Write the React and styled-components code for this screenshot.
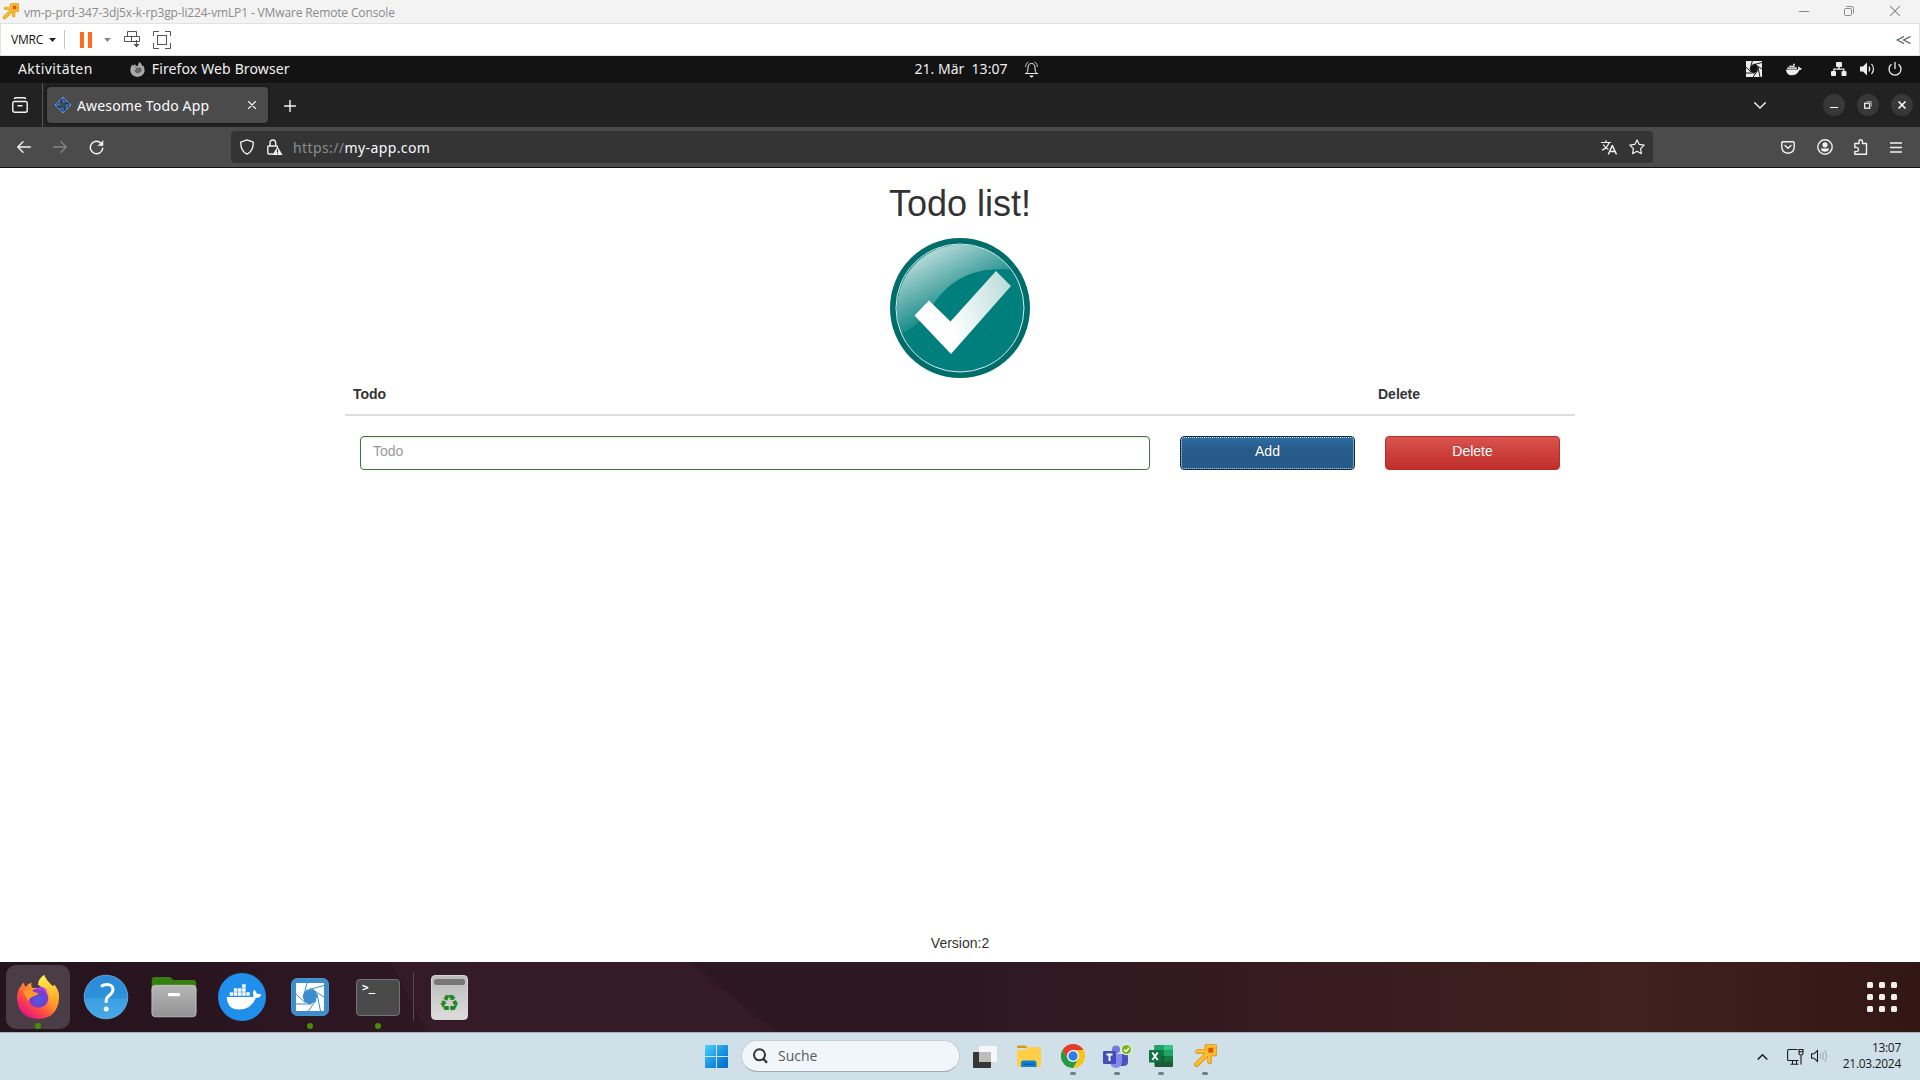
import React from "react";
import styled, { createGlobalStyle } from "styled-components";

const Global = createGlobalStyle`
  *, *::before, *::after { box-sizing: border-box; }
  html, body { margin: 0; padding: 0; }
  body { width: 1920px; height: 1080px; overflow: hidden; background: #fff; }
  svg { display: block; flex: none; }
`;

const ubuntu = `"Noto Sans", "Open Sans", sans-serif`;
const segoe = `"Open Sans", "Noto Sans", sans-serif`;
const helvetica = `"Liberation Sans", Arial, sans-serif`;

const Screen = styled.div`
  width: 1920px;
  height: 1080px;
  display: flex;
  flex-direction: column;
  overflow: hidden;
`;

const Bar = styled.div`
  display: flex;
  align-items: center;
  flex: none;
`;

const Spacer = styled.div`
  flex: 1;
`;

const Text = styled.span`
  white-space: pre;
  letter-spacing: ${(p) => p.$ls || 0}px;
  margin-left: ${(p) => p.$ml || 0}px;
  margin-top: ${(p) => p.$mt || 0}px;
`;

const Icon = styled.svg`
  margin-left: ${(p) => p.$ml || 0}px;
  margin-top: ${(p) => p.$mt || 0}px;
`;

/* ---------- VMware window ---------- */

const TitleBar = styled(Bar)`
  height: 24px;
  background: #f3f3f3;
  border-bottom: 1px solid #e2e2e2;
  padding: 0 20px 2px 2px;
  font: 12px/16px ${segoe};
  color: #8b8b8b;
`;

const VmToolbar = styled(Bar)`
  height: 32px;
  background: #fff;
  border: 1px solid #e2e2e2;
  border-top: 0;
  padding: 0 8px 0 10px;
  font: 12px/16px ${segoe};
  color: #111;
`;

const VmSeparator = styled.div`
  width: 1px;
  height: 19px;
  background: #c8c8c8;
  margin-left: 8px;
`;

const VmwareIcon = ({ size, ...rest }) => (
  <Icon width={size} height={size} viewBox="0 0 24 24" fill="none" {...rest}>
    <g stroke="#d98f0c" strokeLinejoin="round">
      <path d="M4.500 7.500H14M16.500 9V18" strokeWidth="4.400" strokeLinecap="round" />
      <path d="M16 8.500L3.500 20.500" strokeWidth="5" strokeLinecap="round" />
      <rect x="13" y="1.500" width="9.500" height="9.500" strokeWidth="2.600" />
    </g>
    <g stroke="#fcbd2c" strokeLinejoin="round">
      <path d="M4.500 7.300H14M16.300 9V18" strokeWidth="3" strokeLinecap="round" />
      <path d="M16 8.300L3.500 20.300" strokeWidth="3.600" strokeLinecap="round" />
      <rect x="13.300" y="1.800" width="8.900" height="8.900" strokeWidth="1.600" fill="#fcbd2c" />
    </g>
    <rect x="15.300" y="3.800" width="4.900" height="4.900" fill="#e2510f" />
  </Icon>
);

function VmWindowChrome() {
  return (
    <>
      <TitleBar>
        <VmwareIcon size={17} $mt={2} />
        <Text $ml={5} $mt={4} $ls={-0.14}>vm-p-prd-347-3dj5x-k-rp3gp-li224-vmLP1 - VMware Remote Console</Text>
        <Spacer />
        <Icon width="10" height="10" viewBox="0 0 10 10"><path d="M0 5.5H10" stroke="#8a8a8a" /></Icon>
        <Icon $ml={35} width="10" height="10" viewBox="0 0 10 10" fill="none" stroke="#8a8a8a">
          <rect x=".5" y="2.5" width="7" height="7" rx="1.2" /><path d="M2.5 .5H7.5Q9.5 .5 9.5 2.5V7.5" />
        </Icon>
        <Icon $ml={36} width="10" height="10" viewBox="0 0 10 10"><path d="M0 0L10 10M10 0L0 10" stroke="#8a8a8a" strokeWidth="1.1" /></Icon>
      </TitleBar>
      <VmToolbar>
        <Text $ls={-0.2}>VMRC</Text>
        <Icon $ml={6} width="7" height="4" viewBox="0 0 7 4"><path d="M0 0H7L3.5 4Z" fill="#222" /></Icon>
        <VmSeparator />
        <Icon $ml={15} width="12" height="16" viewBox="0 0 12 16"><path d="M0 0H4V16H0ZM8 0H12V16H8Z" fill="#ff6a1f" /></Icon>
        <Icon $ml={12} width="7" height="4" viewBox="0 0 7 4"><path d="M0 0H7L3.5 4Z" fill="#8a8a8a" /></Icon>
        <Icon $ml={13} width="17" height="17" viewBox="0 0 17 17" fill="none" stroke="#555">
          <path d="M3.5 5.5V.5H12.5V5.5M.5 5.5H15.5V10.5H.5ZM7.5 5.5V10.5M12.500 9V14" />
          <path d="M9.500 13H15.500L12.500 16.500Z" fill="#555" stroke="none" />
        </Icon>
        <Icon $ml={12} width="18" height="18" viewBox="0 0 18 18" fill="none" stroke="#555">
          <path d="M.5 5V.5H6M12 .5H17.500V5M17.500 12V17.500H12M6 17.500H.5V12" /><rect x="4.500" y="4.500" width="9" height="9" />
        </Icon>
        <Spacer />
        <Icon width="15" height="8" viewBox="0 0 15 8" fill="none" stroke="#3d5060" strokeWidth="1.100"><path d="M8 .5L1 4L8 7.500M14.500 .5L7.500 4L14.500 7.500" /></Icon>
      </VmToolbar>
    </>
  );
}

/* ---------- GNOME top bar ---------- */

const GnomeBar = styled(Bar)`
  height: 27px;
  padding-bottom: 1px;
  background: #131313;
  color: #efefef;
  font: 14px/20px ${ubuntu};
  display: grid;
  grid-template-columns: 1fr auto 1fr;
`;

const GnomeGroup = styled.div`
  display: flex;
  align-items: center;
  justify-content: ${(p) => p.$justify || "flex-start"};
  padding: ${(p) => p.$pad || 0};
`;

const Aperture = ({ size, fg, bg, sw, ...rest }) => (
  <Icon width={size} height={size} viewBox="0 0 28 28" {...rest}>
    <rect width="28" height="28" fill={fg} />
    <path d="M10 7.500L18 6.500L21.500 12L19.500 18.500L14 21.500L8.500 19L6.500 13Z" fill={bg} />
    <path d="M11 0L7.500 13M28 2.500L10 7.500M14 5L28 14M21 11L24.500 28M20 17L12.500 28M15 21H0M9 19.500L0 11" stroke={bg} strokeWidth={sw} fill="none" />
  </Icon>
);

const Whale = ({ w, h, fg, ...rest }) => (
  <Icon width={w} height={h} viewBox="0 0 36 28" fill={fg} {...rest}>
    <path d="M0 14H27Q28.500 12.500 27.200 10.500Q27 8 28.600 6.500Q31 8 31.200 10.600Q34 10.200 36 11.600Q34.500 15 30.200 15Q25.500 27 12.500 27Q1 27 0 14Z" />
    <path d="M3.200 9.200H6.800V12.800H3.200ZM7.500 9.200H11.100V12.800H7.500ZM11.800 9.200H15.400V12.800H11.800ZM16.100 9.200H19.700V12.800H16.100ZM20.400 9.200H24V12.800H20.400ZM7.500 5H11.100V8.600H7.500ZM11.800 5H15.400V8.600H11.800ZM16.100 5H19.700V8.600H16.100ZM16.100 .8H19.700V4.400H16.100Z" />
  </Icon>
);

function GnomeTopBar() {
  return (
    <GnomeBar>
      <GnomeGroup $pad="0 0 0 18px">
        <Text $ls={0.4}>Aktivitäten</Text>
        <Icon $ml={37} width="15" height="15" viewBox="0 0 42 44">
          <path d="M2 14L6 7L9 11L14 6L16 12L22 12Q22 4 28 0Q33 6 35 12L38 10Q42 18 42 26Q40 42 21 44Q2 42 0 26Q0 18 2 14Z" fill="#aaa" />
          <path d="M12 14L22 17Q30 12 33 20Q35 30 24 33Q13 33 12 24L18 20Z" fill="#666" />
        </Icon>
        <Text $ml={7} $ls={0.14}>Firefox Web Browser</Text>
      </GnomeGroup>
      <GnomeGroup $pad="0 0 0 33px">
        <Text>21. Mär  13:07</Text>
        <Icon $ml={18} width="13" height="17" viewBox="0 0 13 17" fill="none" stroke="#eee">
          <path d="M1.500 12.500Q3 11 3 7Q3 2.500 6.500 2.500Q10 2.500 10 7Q10 11 11.500 12.500Z" /><path d="M.5 6Q.5 2 3.500 1M12.500 6Q12.500 2 9.500 1" strokeWidth=".8" />
          <path d="M0 12.500H13" /><path d="M4.500 14.500H8.500Q8 16.500 6.500 16.500T4.500 14.500" fill="#eee" stroke="none" />
        </Icon>
      </GnomeGroup>
      <GnomeGroup $justify="flex-end" $pad="0 18px 0 0">
        <Aperture size={16} fg="#eee" bg="#131313" sw={1.700} />
        <Whale $ml={24} w={16} h={13} fg="#eee" />
        <Icon $ml={29} width="16" height="14" viewBox="0 0 16 14" fill="#eee">
          <rect x="5" width="6" height="5" rx="1" /><rect y="9" width="5" height="5" rx="1" /><rect x="10.500" y="9" width="5" height="5" rx="1" /><path d="M7.300 4H8.700V6.500H13.500V9.500H12.300V7.800H3.500V9.500H2.300V6.500H7.300Z" />
        </Icon>
        <Icon $ml={13} width="15" height="14" viewBox="0 0 15 14" fill="none" stroke="#eee">
          <path d="M0 4.500H3L7 .5V13.500L3 9.500H0Z" fill="#eee" stroke="none" /><path d="M9 4.500Q10.500 7 9 9.500" strokeWidth="1.400" /><path d="M11.500 2Q15.500 7 11.500 12" strokeWidth="1.200" />
        </Icon>
        <Icon $ml={13} width="14" height="14" viewBox="0 0 14 14" fill="none" stroke="#eee" strokeWidth="1.300">
          <path d="M3.500 2.200A6 6 0 1 0 10.500 2.200M7 0V7" />
        </Icon>
      </GnomeGroup>
    </GnomeBar>
  );
}

/* ---------- Firefox ---------- */

const TabStrip = styled(Bar)`
  height: 44px;
  background: #222;
  padding: 0 7px 0 12px;
`;

const StripDivider = styled.div`
  width: 1px;
  height: 44px;
  margin-left: 14px;
  background: #555;
`;

const Tab = styled.div`
  display: flex;
  align-items: center;
  width: 221px;
  height: 36px;
  margin-left: 4px;
  padding: 0 12px 0 8px;
  border-radius: 4px;
  background: #4b4b4b;
  box-shadow: 0 0 3px rgba(0, 0, 0, 0.5);
  color: #fbfbfe;
  font: 14px/20px ${ubuntu};
`;

const WindowButton = styled.div`
  display: flex;
  align-items: center;
  justify-content: center;
  width: 22px;
  height: 22px;
  border-radius: 50%;
  margin-left: ${(p) => p.$ml || 12}px;
  background: #383838;
`;

const NavBar = styled(Bar)`
  height: 41px;
  padding: 0 18px 0 17px;
  background: #4b4b4b;
  border-bottom: 1px solid #111;
`;

const UrlField = styled.div`
  display: flex;
  align-items: center;
  width: 1422px;
  height: 32px;
  margin-left: 127px;
  padding: 0 8px 0 9px;
  border-radius: 4px;
  background: #343434;
  color: #fbfbfe;
  font: 14px/20px ${ubuntu};
`;

const Scheme = styled.span`
  color: #8c8c8e;
`;

const line = { fill: "none", stroke: "#f2f2f4", strokeWidth: 1.4, strokeLinecap: "round", strokeLinejoin: "round" };

function FirefoxChrome() {
  return (
    <>
      <TabStrip>
        <Icon width="16" height="16" viewBox="0 0 16 16" {...line}>
          <rect x=".8" y="4.500" width="14.400" height="10.700" rx="1.800" /><path d="M2.500 1.500Q3 .8 4 .8H12Q13 .8 13.500 1.500M6 8.800H10" />
        </Icon>
        <StripDivider />
        <Tab>
          <Icon width="16" height="16" viewBox="0 0 16 16">
            <path d="M8 0L16 8L8 16L0 8Z" fill="#15407f" /><path d="M8 4.500L11.500 8L8 11.500L4.500 8Z" fill="#4b4b4b" />
            <path d="M8 0L16 8L8 16L0 8ZM8 4.500V0M11.500 8H16M8 11.500V16M4.500 8H0M8 4.500L12 4M11.500 8L12 12M8 11.500L4 12M4.500 8L4 4" stroke="#8fb8e6" strokeWidth=".6" fill="none" />
          </Icon>
          <Text $ml={6} $mt={1} $ls={0.15}>Awesome Todo App</Text>
          <Spacer />
          <Icon width="8" height="8" viewBox="0 0 8 8" {...line} strokeWidth="1.100"><path d="M.5 .5L7.500 7.500M7.500 .5L.5 7.500" /></Icon>
        </Tab>
        <Icon $ml={16} $mt={1} width="12" height="12" viewBox="0 0 12 12" {...line}><path d="M6 .5V11.500M.5 6H11.500" /></Icon>
        <Spacer />
        <Icon width="12" height="7" viewBox="0 0 12 7" {...line}><path d="M.7 .7L6 6L11.300 .7" /></Icon>
        <WindowButton $ml={57}><Icon $mt={5} width="8" height="1" viewBox="0 0 8 1"><rect width="8" height="1" fill="#fff" /></Icon></WindowButton>
        <WindowButton>
          <Icon width="8" height="8" viewBox="0 0 8 8" fill="none"><rect x=".7" y="2.200" width="5" height="5" stroke="#fff" strokeWidth="1.200" /><path d="M2.500 .5H7.500V5.500" stroke="#999" /></Icon>
        </WindowButton>
        <WindowButton><Icon width="8" height="8" viewBox="0 0 8 8"><path d="M.5 .5L7.500 7.500M7.500 .5L.5 7.500" stroke="#fff" strokeWidth="1.500" /></Icon></WindowButton>
      </TabStrip>
      <NavBar>
        <Icon width="14" height="12" viewBox="0 0 14 12" {...line}><path d="M6 .8L.8 6L6 11.200M1 6H13.300" /></Icon>
        <Icon $ml={22} width="14" height="12" viewBox="0 0 14 12" {...line} stroke="#858585"><path d="M8 .8L13.200 6L8 11.200M13 6H.7" /></Icon>
        <Icon $ml={22} width="15" height="15" viewBox="0 0 15 15" {...line} strokeWidth="1.500"><path d="M13.700 8.300A6.200 6.200 0 1 1 12 3.200" /><path d="M14 1V5.600H9.400Z" fill="#f2f2f4" strokeWidth=".6" /></Icon>
        <UrlField>
          <Icon width="14" height="16" viewBox="0 0 14 16" {...line} strokeWidth="1.300"><path d="M7 .8L13.300 3.200Q13.500 12 7 15.200Q.5 12 .7 3.200Z" /></Icon>
          <Icon $ml={13} width="16" height="17" viewBox="0 0 16 17" {...line}>
            <path d="M3 7V4.500Q3 1 5.800 1Q8.700 1 8.700 4.500V7M10.500 8Q10.500 7 9.500 7H2Q.8 7 .8 8.200V13.800Q.8 15 2 15H5.500" />
            <path d="M10.500 7.500L15.600 16H5.400Z" fill="#f2f2f4" stroke="none" /><path d="M10.500 10.500V13M10.500 14.500V14.600" stroke="#343434" strokeWidth="1.200" />
          </Icon>
          <Text $ml={10} $mt={1} $ls={0.4}><Scheme>https://</Scheme>my-app.com</Text>
          <Spacer />
          <Icon width="16" height="15" viewBox="0 0 16 15" {...line} strokeWidth="1.200" strokeLinecap="butt">
            <path d="M0 2.500H10M5 .3V2.500M8 2.500Q6.500 8 .8 10.200M2.300 4.500Q4.500 8.500 7.500 9.500" /><path d="M7.300 14.500L11.300 5.500L15.500 14.500M8.800 11.500H14" strokeWidth="1.500" />
          </Icon>
          <Icon $ml={12} width="16" height="16" viewBox="0 0 16 16" {...line} strokeWidth="1.200"><path d="M8 .9L10.200 5.400L15.200 6.100L11.600 9.600L12.400 14.700L8 12.300L3.600 14.700L4.400 9.600L.8 6.100L5.800 5.400Z" /></Icon>
        </UrlField>
        <Spacer />
        <Icon width="14" height="13" viewBox="0 0 14 13" {...line}><path d="M2 .8H12Q13.200 .8 13.200 2V6Q13 12 7 12.200Q1 12 .8 6V2Q.8 .8 2 .8ZM4 4.500L7 7.300L10 4.500" /></Icon>
        <Icon $ml={22} width="16" height="16" viewBox="0 0 16 16" {...line}>
          <circle cx="8" cy="8" r="7.200" /><circle cx="8" cy="5.800" r="2.600" fill="#f2f2f4" stroke="none" /><path d="M3.800 9.500H12.200Q11.500 12.800 8 12.800T3.800 9.500Z" fill="#f2f2f4" stroke="none" />
        </Icon>
        <Icon $ml={21} width="14" height="16" viewBox="0 0 14 16" {...line}>
          <path d="M.8 15.200V12.500Q4.500 13 4.500 10.500T.8 8.500V4.500H5V2.500Q5 .8 6.700 .8T8.500 2.500V4.500H12.500V15.200Z" />
        </Icon>
        <Icon $ml={22} width="12" height="11" viewBox="0 0 12 11" stroke="#f2f2f4" strokeWidth="1.300"><path d="M0 1H12M0 5.500H12M0 10H12" /></Icon>
      </NavBar>
    </>
  );
}

/* ---------- Todo page ---------- */

const Page = styled.main`
  flex: none;
  height: 794px;
  display: flex;
  flex-direction: column;
  align-items: center;
  background: #fff;
  color: #333;
  font: 14px/20px ${helvetica};
`;

const Heading = styled.h1`
  margin: 15px 0 14px;
  font: 500 36px/41px ${helvetica};
`;

const TodoTable = styled.section`
  width: 1230px;
`;

const Row = styled.div`
  display: grid;
  grid-template-columns: 8fr 2fr 2fr;
`;

const HeadRow = styled(Row)`
  height: 38px;
  border-bottom: 2px solid #ddd;
  padding-top: 6px;
  font-weight: 700;
`;

const HeadCell = styled.div`
  padding-left: 8px;
`;

const FormRow = styled(Row)`
  padding-top: 20px;
`;

const Cell = styled.div`
  padding: 0 15px;
`;

const TodoInput = styled.input`
  display: block;
  width: 100%;
  height: 34px;
  padding: 4px 12px 8px;
  border: 1px solid #3c763d;
  border-radius: 4px;
  outline: 0;
  font: 14px/20px ${helvetica};
  box-shadow: inset 0 1px 1px rgba(0, 0, 0, 0.075);
  &::placeholder { color: #999; opacity: 1; }
`;

const Button = styled.button`
  display: block;
  width: 100%;
  height: 34px;
  padding: 0 0 4px;
  border-radius: 4px;
  border: 1px solid ${(p) => (p.$danger ? "#b92c28" : "#122b40")};
  background: ${(p) => (p.$danger ? "linear-gradient(#d9534f, #c12e2a)" : "linear-gradient(#2d6ca2 0%, #265a88 45%, #265a88 100%)")};
  outline: ${(p) => (p.$focused ? "1px dotted #cfdeeb" : "0")};
  outline-offset: -2px;
  color: #fff;
  font: 14px/20px ${helvetica};
  text-shadow: 0 -1px 0 rgba(0, 0, 0, 0.2);
`;

const Version = styled.footer`
  margin-top: auto;
  padding-bottom: 9px;
`;

const CheckBadge = () => (
  <svg width="140" height="140" viewBox="0 0 140 140">
    <defs>
      <linearGradient id="gloss" gradientUnits="userSpaceOnUse" x1="30" y1="18" x2="62" y2="78">
        <stop offset="0" stopColor="#fff" stopOpacity=".72" /><stop offset="1" stopColor="#fff" stopOpacity=".02" />
      </linearGradient>
      <linearGradient id="tick" gradientUnits="userSpaceOnUse" x1="55" y1="70" x2="122" y2="50">
        <stop offset="0" stopColor="#fff" /><stop offset="1" stopColor="#b9dcda" />
      </linearGradient>
    </defs>
    <circle cx="70" cy="70" r="70" fill="#006d6a" />
    <circle cx="70" cy="70" r="64" fill="#007f7c" />
    <path d="M12 96A64 64 0 0 1 115 24.500Q122 31 118 31.500C80 29 56 44 40 72Q30 86 12 96Z" fill="url(#gloss)" />
    <circle cx="70" cy="70" r="64" fill="none" stroke="#d5ecea" strokeWidth="1" />
    <path d="M24.500 77.500L39 62.500L60.500 83.500L106 33L121 48L61 116Z" fill="url(#tick)" strokeLinejoin="round" />
  </svg>
);

function TodoPage() {
  return (
    <Page>
      <Heading>Todo list!</Heading>
      <CheckBadge />
      <TodoTable>
        <HeadRow><HeadCell>Todo</HeadCell><HeadCell /><HeadCell>Delete</HeadCell></HeadRow>
        <FormRow>
          <Cell><TodoInput placeholder="Todo" /></Cell>
          <Cell><Button $focused>Add</Button></Cell>
          <Cell><Button $danger>Delete</Button></Cell>
        </FormRow>
      </TodoTable>
      <Version>Version:2</Version>
    </Page>
  );
}

/* ---------- Ubuntu dock ---------- */

const DockBar = styled(Bar)`
  height: 70px;
  padding: 0 23px 0 4px;
  background:
    linear-gradient(to top right, transparent 50%, #351b28 50%) 390px 0 / 38px 70px no-repeat,
    linear-gradient(#351b28, #351b28) 428px 0 / 262px 70px no-repeat,
    linear-gradient(to bottom left, transparent 50%, #351b28 50%) 690px 0 / 85px 70px no-repeat,
    linear-gradient(90deg, #25131d 0%, #2d1722 20%, #2d1822 50%, #371b20 68%, #40211d 85%, #331714 100%);
`;

const DockItem = styled.div`
  display: flex;
  align-items: center;
  justify-content: center;
  width: 64px;
  height: 64px;
  margin: 0 2px;
  border-radius: 10px;
  position: relative;
  background: ${(p) => (p.$active ? "#4b3d45" : "transparent")};
`;

const RunningDot = styled.i`
  position: absolute;
  left: 29px;
  bottom: 0;
  width: 6px;
  height: 6px;
  border-radius: 50%;
  background: #4e8a06;
`;

const DockDivider = styled.div`
  width: 1px;
  height: 48px;
  margin: 0 1px;
  background: #5a4850;
`;

const AppsGrid = styled.div`
  display: grid;
  grid-template-columns: repeat(3, 6px);
  gap: 6px;
`;

const AppsDot = styled.i`
  height: 6px;
  border-radius: 1.5px;
  background: #f2f0ef;
`;

const Firefox = () => (
  <svg width="44" height="46" viewBox="0 0 44 46">
    <defs>
      <linearGradient id="fxBody" x1=".85" y1=".1" x2=".2" y2=".95">
        <stop offset="0" stopColor="#ffe14a" /><stop offset=".4" stopColor="#ff9a2a" /><stop offset=".7" stopColor="#ff4a45" /><stop offset="1" stopColor="#e3128a" />
      </linearGradient>
      <linearGradient id="fxTail" x1=".5" y1="0" x2=".6" y2="1"><stop offset="0" stopColor="#fff04c" /><stop offset=".6" stopColor="#ffb02e" /><stop offset="1" stopColor="#ff7a2a" stopOpacity="0" /></linearGradient>
      <radialGradient id="fxGlobe" cx=".5" cy=".6" r=".6"><stop offset="0" stopColor="#4d5fe0" /><stop offset=".6" stopColor="#6d3fd0" /><stop offset="1" stopColor="#a52fd6" /></radialGradient>
    </defs>
    <path d="M1 24Q1 16 5 12Q5.500 10 8 8.500Q8 11 9.500 13Q12 9.500 15.500 8.500Q14.500 12 17 14L26 14Q20 9 28 1Q31 7 36 12Q38 14 38 10.500Q43 16 43 24Q42 44 22 45Q2 44 1 24Z" fill="url(#fxBody)" />
    <path d="M22 11Q22 5 28 1Q29 5 34 9.500Q38 14 38 10.500Q43 16 43 24Q42 34 35 39Q38 30 34 22Q31 14 22 11Z" fill="url(#fxTail)" />
    <circle cx="22.500" cy="24" r="9.800" fill="url(#fxGlobe)" />
    <path d="M21 14Q28 11 31.500 18Q27 15 23 16Z" fill="#b53ae0" />
    <path d="M7 17Q14 14 18 18Q21 19 23 19Q21 22 17 22.500Q13 24 12.500 27Q9 22 7 17Z" fill="#ff9a2a" />
  </svg>
);

const HelpIcon = () => (
  <svg width="46" height="46" viewBox="0 0 46 46">
    <defs><linearGradient id="help" x1="0" y1="0" x2="0" y2="1"><stop offset="0" stopColor="#2a8ad6" /><stop offset=".53" stopColor="#2d92dc" /><stop offset=".54" stopColor="#3ba0e2" /><stop offset="1" stopColor="#48a8e6" /></linearGradient></defs>
    <circle cx="23" cy="23" r="21.800" fill="url(#help)" stroke="#6bb6e8" strokeWidth=".8" />
    <path d="M18 12.500Q21 10.300 24.500 10.500Q30 11 30 15.500Q30 18.500 26.500 21.200Q23.200 23.500 23.200 27V29" fill="none" stroke="#fff" strokeWidth="3" /><circle cx="23.200" cy="35" r="2.500" fill="#fff" />
  </svg>
);

const FilesIcon = () => (
  <svg width="46" height="42" viewBox="0 0 46 42">
    <defs><linearGradient id="files" x1="0" y1="0" x2="0" y2="1"><stop offset="0" stopColor="#b6b6b6" /><stop offset="1" stopColor="#939393" /></linearGradient></defs>
    <path d="M.7 12V4Q.7 1 3.700 1H18Q20 1 21 2.500L22.500 4H42Q45.300 4 45.300 7.500V16H.7Z" fill="#37800f" />
    <rect x=".9" y="9.300" width="44.200" height="31.500" rx="3.500" fill="url(#files)" stroke="#c9c9c9" strokeWidth=".8" />
    <rect x="17" y="17" width="12" height="3.200" rx="1" fill="#fff" />
  </svg>
);

const DockerIcon = () => (
  <svg width="48" height="48" viewBox="0 0 48 48">
    <circle cx="24" cy="24" r="24" fill="#1f8feb" />
    <Whale x="8" y="10.500" w="36" h="27" fg="#fff" />
  </svg>
);

const VirtBox = styled.div`
  display: flex;
  align-items: center;
  justify-content: center;
  width: 38px;
  height: 38px;
  border-radius: 7px;
  background: #3c8dcb;
  box-shadow: inset 0 0 0 1px #4a95ce;
`;

const TerminalBox = styled.div`
  width: 44px;
  height: 37px;
  padding: 1px 0 0 5px;
  border-radius: 4px;
  border: 1px solid #757575;
  background: #4a4a4a;
  color: #fff;
  font: bold 11px/14px "DejaVu Sans Mono", monospace;
`;

const TrashCan = styled.div`
  display: flex;
  flex-direction: column;
  align-items: center;
  width: 37px;
  height: 45px;
  padding-top: 3px;
  border-radius: 4px;
  border: 1px solid #d6d6d6;
  background: linear-gradient(#bababa, #dcdcdc);
  color: #23871f;
  font: 23px/36px "DejaVu Sans", sans-serif;
`;

const TrashSlot = styled.i`
  flex: none;
  width: 31px;
  height: 6px;
  border-radius: 2.5px;
  background: #777;
`;

function Dock() {
  return (
    <DockBar>
      <DockItem $active><Firefox /><RunningDot /></DockItem>
      <DockItem><HelpIcon /></DockItem>
      <DockItem><FilesIcon /></DockItem>
      <DockItem><DockerIcon /></DockItem>
      <DockItem><VirtBox><Aperture size={28} fg="#fff" bg="#3c8dcb" sw={1} /></VirtBox><RunningDot /></DockItem>
      <DockItem><TerminalBox>&gt;_</TerminalBox><RunningDot /></DockItem>
      <DockDivider />
      <DockItem><TrashCan><TrashSlot />♻</TrashCan></DockItem>
      <Spacer />
      <AppsGrid>{Array.from({ length: 9 }, (_, i) => <AppsDot key={i} />)}</AppsGrid>
    </DockBar>
  );
}

/* ---------- Windows taskbar ---------- */

const Taskbar = styled(Bar)`
  height: 48px;
  border-top: 1px solid #a9b2b9;
  background: #cfe0e8;
  padding: 0 19px 0 705px;
  font: 12px/16px ${segoe};
  color: #1b1b1b;
`;

const SearchBox = styled.div`
  display: flex;
  align-items: center;
  width: 219px;
  height: 32px;
  margin: -1px 0 0 13px;
  padding-left: 11px;
  border: 1px solid #c3d0d7;
  border-bottom-color: #9fabb2;
  border-radius: 16px;
  background: #f0f6f9;
  color: #555b5f;
  font: 14px/20px ${segoe};
`;

const TaskList = styled.div`
  display: flex;
  margin-left: 3px;
`;

const Task = styled.div`
  width: 44px;
  height: 47px;
  padding-bottom: 1px;
  display: flex;
  align-items: center;
  justify-content: center;
  position: relative;
`;

const Pill = styled.i`
  position: absolute;
  left: 19px;
  bottom: 5px;
  width: 6px;
  height: 3px;
  border-radius: 1.5px;
  background: #737f86;
`;

const Clock = styled.div`
  margin: -1px 0 0 14px;
  text-align: right;
  width: 59px;
  letter-spacing: -0.3px;
  white-space: nowrap;
`;

function WindowsTaskbar() {
  return (
    <Taskbar>
      <svg width="23" height="23" viewBox="0 0 23 23">
        <defs><linearGradient id="win" gradientUnits="userSpaceOnUse" x1="0" y1="0" x2="23" y2="23"><stop offset="0" stopColor="#4fd0fb" /><stop offset=".5" stopColor="#1c96e4" /><stop offset="1" stopColor="#0068c8" /></linearGradient></defs>
        <path d="M0 1Q0 0 1 0H11V11H0ZM12 0H22Q23 0 23 1V11H12ZM0 12H11V23H1Q0 23 0 22ZM12 12H23V22Q23 23 22 23H12Z" fill="url(#win)" />
      </svg>
      <SearchBox>
        <svg width="15" height="16" viewBox="0 0 15 16" fill="none" stroke="#333" strokeWidth="2"><circle cx="6.500" cy="6.800" r="5.500" /><path d="M10.500 11L14 14.800" strokeWidth="2.400" /></svg>
        <Text $ml={10}>Suche</Text>
      </SearchBox>
      <TaskList>
        <Task>
          <svg width="24" height="23" viewBox="0 0 24 23"><rect x="0" y="7" width="18" height="16" rx="1" fill="#363636" /><rect x="6" y="1" width="18" height="16" rx="1" fill="#f7f7f7" /><rect x="6" y="7" width="12" height="10" fill="#bdbdbd" /></svg>
        </Task>
        <Task>
          <svg width="24" height="22" viewBox="0 0 24 22"><path d="M0 2Q0 .5 1.500 .5H8.500L11 3H0Z" fill="#d99a0b" /><path d="M0 5H8L11 2H22.500Q24 2 24 3.500V20.500Q24 22 22.500 22H1.500Q0 22 0 20.500Z" fill="#ffcf48" /><path d="M4 22V18Q4 15.500 6.500 15.500H17Q19.500 15.500 19.500 18V22Z" fill="#1180d0" /><rect x="7" y="18.500" width="10" height="1.500" rx=".7" fill="#0a5fa5" /></svg>
        </Task>
        <Task>
          <svg width="24" height="24" viewBox="0 0 24 24"><circle cx="12" cy="12" r="12" fill="#fbc316" /><path d="M1.600 6A12 12 0 0 1 22.400 6H12L6.800 15Z" fill="#e33b2e" /><path d="M1.600 6A12 12 0 0 0 12 24L17.200 15H6.800Z" fill="#229a4a" /><circle cx="12" cy="12" r="6" fill="#fff" /><circle cx="12" cy="12" r="4.700" fill="#2f7de9" /></svg>
          <Pill />
        </Task>
        <Task>
          <svg width="30" height="26" viewBox="0 0 30 26">
            <circle cx="14" cy="6.500" r="4" fill="#7579df" /><circle cx="22" cy="7" r="3" fill="#5059c9" /><path d="M17 11H26V19Q26 23 21 23H17Z" fill="#4b53bc" /><path d="M8.500 11H20V18Q20 25 14 25T8.500 18Z" fill="#8388ec" />
            <rect x="1" y="8" width="13" height="13" rx="1.200" fill="#444cb8" /><path d="M4.500 11.500H10.500M7.500 11.500V18" stroke="#fff" strokeWidth="1.900" />
            <circle cx="24.500" cy="6.500" r="5.200" fill="#7cb518" stroke="#e6efe0" strokeWidth="1.200" /><path d="M22 6.500L24 8.500L27.200 4.800" stroke="#fff" strokeWidth="1.400" fill="none" />
          </svg>
          <Pill />
        </Task>
        <Task>
          <svg width="24" height="22" viewBox="0 0 24 22"><rect x="5.500" width="18.500" height="22" rx="1" fill="#185c37" /><path d="M5.500 0H15V5.500H5.500Z" fill="#21a366" /><path d="M15 0H24V5.500H15Z" fill="#33c481" /><path d="M5.500 5.500H15V11H5.500Z" fill="#107c41" /><path d="M15 5.500H24V11H15Z" fill="#21a366" /><path d="M15 11H24V16.500H15Z" fill="#107c41" /><rect y="5" width="12.500" height="12.500" rx="1" fill="#0f7240" /><path d="M3.300 7.500L8.700 15M8.700 7.500L3.300 15" stroke="#fff" strokeWidth="1.900" /></svg>
          <Pill />
        </Task>
        <Task><VmwareIcon size={24} /><Pill /></Task>
      </TaskList>
      <Spacer />
      <Icon width="11" height="6" viewBox="0 0 11 6" fill="none" stroke="#1b1b1b" strokeWidth="1.500"><path d="M.7 5.500L5.500 .8L10.300 5.500" /></Icon>
      <Icon $ml={19} $mt={-1} width="17" height="17" viewBox="0 0 17 17" fill="none" stroke="#1b1b1b" strokeWidth="1.100">
        <path d="M10.500 1.500H1.500Q.6 1.500 .6 2.500V11.500Q.6 12.500 1.500 12.500H11.500M5.500 12.500V16M9.500 12.500V16M3.500 16.200H11.500M12 1.500H16V5.500Q16 7 14 7T12 5.500ZM14 7V16.500M12 3.800H16" />
      </Icon>
      <Icon $ml={7} $mt={-1} width="17" height="14" viewBox="0 0 17 14" fill="none" stroke="#1b1b1b" strokeWidth="1.100">
        <path d="M.6 4.800H3L6.500 1.500V12.500L3 9.200H.6Z" /><path d="M9 4.500Q10.500 7 9 9.500M11.300 3Q13.800 7 11.300 11M13.500 1Q17.500 7 13.500 13" stroke="#a4b1b8" />
      </Icon>
      <Clock>13:07<br />21.03.2024</Clock>
    </Taskbar>
  );
}

export default function App() {
  return (
    <Screen>
      <Global />
      <VmWindowChrome />
      <GnomeTopBar />
      <FirefoxChrome />
      <TodoPage />
      <Dock />
      <WindowsTaskbar />
    </Screen>
  );
}
